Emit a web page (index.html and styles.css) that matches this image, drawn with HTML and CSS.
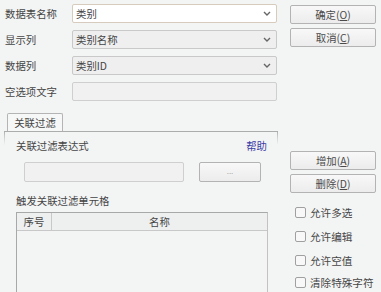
FILE: index.html
```html
<!DOCTYPE html>
<html lang="zh">
<head>
<meta charset="utf-8">
<link rel="stylesheet" href="styles.css">
</head>
<body>
<div class="page">
  <div class="left">
    <div class="form">
      <div class="label">数据表名称</div>
      <div class="combo active"><span>类别</span><svg class="chev" viewBox="0 0 8 5" width="8" height="5"><path d="M1 1 L4 4 L7 1" fill="none" stroke="#666" stroke-width="1.4"/></svg></div>
      <div class="label">显示列</div>
      <div class="combo"><span>类别名称</span><svg class="chev" viewBox="0 0 8 5" width="8" height="5"><path d="M1 1 L4 4 L7 1" fill="none" stroke="#666" stroke-width="1.4"/></svg></div>
      <div class="label">数据列</div>
      <div class="combo"><span>类别ID</span><svg class="chev" viewBox="0 0 8 5" width="8" height="5"><path d="M1 1 L4 4 L7 1" fill="none" stroke="#666" stroke-width="1.4"/></svg></div>
      <div class="label">空选项文字</div>
      <div class="textbox"></div>
    </div>
    <div class="tabs">
      <div class="tab">关联过滤</div>
      <div class="pane">
        <div class="row-head"><span>关联过滤表达式</span><span class="help">帮助</span></div>
        <div class="row-expr">
          <div class="textbox expr"></div>
          <div class="btn dots">...</div>
        </div>
        <div class="row-cap">触发关联过滤单元格</div>
        <div class="table">
          <div class="thead">
            <div class="th num">序号</div>
            <div class="th name">名称</div>
          </div>
        </div>
      </div>
    </div>
  </div>
  <div class="right">
    <div class="btn">确定(<u>O</u>)</div>
    <div class="btn">取消(<u>C</u>)</div>
    <div class="btn add">增加(<u>A</u>)</div>
    <div class="btn">删除(<u>D</u>)</div>
    <div class="checks">
      <div class="check"><span class="box"></span>允许多选</div>
      <div class="check"><span class="box"></span>允许编辑</div>
      <div class="check"><span class="box"></span>允许空值</div>
      <div class="check"><span class="box"></span>清除特殊字符</div>
    </div>
  </div>
</div>
</body>
</html>
```

FILE: styles.css
```css
html, body {
  margin: 0;
  padding: 0;
  background: #f3f4f4;
  width: 381px;
  height: 292px;
  overflow: hidden;
}
body {
  font-family: "Noto Sans CJK SC", "Noto Sans", sans-serif;
  font-size: 10.4px;
  color: #454545;
}
.page {
  display: flex;
  align-items: flex-start;
  height: 292px;
  overflow: hidden;
}
.left {
  width: 281px;
  flex: none;
}
.form {
  display: grid;
  grid-template-columns: 67px 205px;
  grid-auto-rows: 19px;
  row-gap: 7px;
  margin: 4px 0 0 5px;
  align-items: center;
}
.label {
  line-height: 19px;
}
.combo {
  box-sizing: border-box;
  height: 19px;
  border: 1px solid #c9c9c9;
  border-radius: 2px;
  background: #efefef;
  display: flex;
  align-items: center;
  justify-content: space-between;
  padding: 0 5px 0 3px;
}
.combo.active {
  background: #ffffff;
  border-color: #d6cbbd;
}
.chev {
  display: block;
}
.textbox {
  box-sizing: border-box;
  height: 19px;
  border: 1px solid #cfcfcf;
  border-radius: 2px;
  background: #f1f1f1;
}
.tabs {
  margin: 12px 0 0 4px;
}
.tab {
  box-sizing: border-box;
  margin-left: 3px;
  width: 56px;
  height: 18px;
  border: 1px solid #b4b4b4;
  border-bottom: none;
  border-radius: 2px 2px 0 0;
  background: #f6f7f7;
  text-align: center;
  line-height: 17px;
}
.pane {
  box-sizing: border-box;
  width: 274px;
  height: 161px;
  border: 1px solid transparent;
  border-bottom: none;
  border-image: linear-gradient(to bottom, #a9a9a9 0, #c4c4c4 4px, rgba(200,200,200,0) 14px) 1;
  padding: 7px 10px 0 11px;
}
.row-head {
  display: flex;
  justify-content: space-between;
  line-height: 14px;
}
.help {
  color: #3c3ca6;
}
.row-expr {
  display: flex;
  align-items: center;
  margin-top: 9px;
}
.textbox.expr {
  width: 160px;
  height: 20px;
  margin-left: 8px;
}
.btn {
  box-sizing: border-box;
  height: 19px;
  border: 1px solid #b3b3b3;
  border-radius: 2px;
  background: linear-gradient(to bottom, #f8f8f8, #ececec);
  text-align: center;
  line-height: 17px;
  color: #4a4a4a;
}
.btn u {
  text-decoration-thickness: 1px;
  text-underline-offset: 1px;
}
.btn.dots {
  width: 62px;
  height: 20px;
  margin-left: 15px;
  color: #aaa;
  font-size: 8px;
  line-height: 16px;
}
.row-cap {
  margin-top: 12px;
  line-height: 14px;
}
.table {
  margin-top: 4px;
  width: 252px;
  height: 81px;
  box-sizing: border-box;
  border: 1px solid #a8a8a8;
  border-bottom: none;
  border-right-color: #c2c2c2;
  background: #f3f4f4;
}
.thead {
  display: flex;
  height: 17px;
  border-bottom: 1px solid #c8c8c8;
  background: #eef0f0;
}
.th {
  line-height: 17px;
  text-align: center;
}
.th.num {
  width: 34px;
  border-right: 1px solid #c8c8c8;
}
.th.name {
  flex: 1;
}
.right {
  margin: 5px 0 0 9px;
  width: 86px;
  display: flex;
  flex-direction: column;
  gap: 4px;
}
.btn.add {
  margin-top: 100px;
}
.checks {
  margin-top: 3px;
  margin-left: 5px;
  display: flex;
  flex-direction: column;
}
.check {
  height: 24px;
  display: flex;
  align-items: center;
  font-size: 10.6px;
  color: #474747;
}
.check:last-child {
  height: 20px;
}
.box {
  box-sizing: border-box;
  width: 11px;
  height: 11px;
  border: 1px solid #a0a0a0;
  border-radius: 2px;
  background: #f8f8f8;
  margin-right: 4px;
  flex: none;
}
```
